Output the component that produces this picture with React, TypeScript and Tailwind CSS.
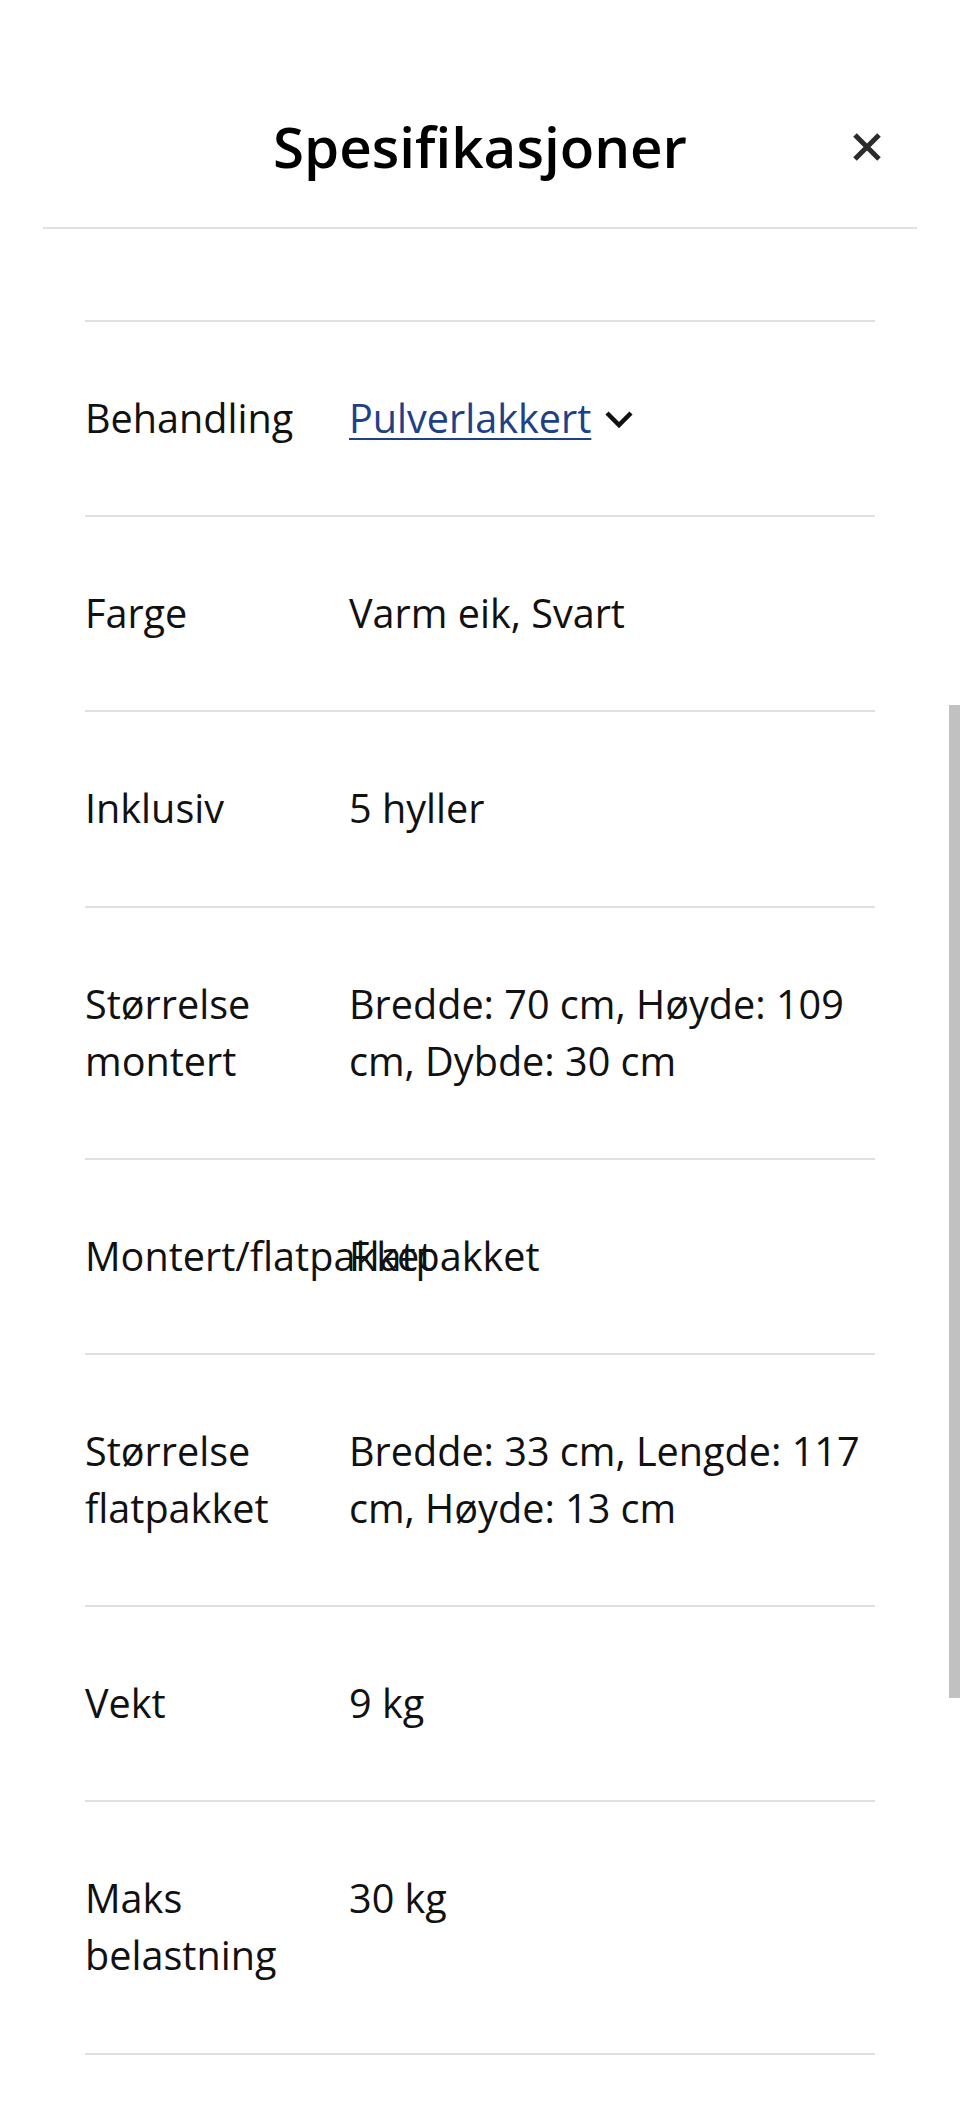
const specs: { label: string; value: string; link?: boolean }[] = [
  { label: 'Behandling', value: 'Pulverlakkert', link: true },
  { label: 'Farge', value: 'Varm eik, Svart' },
  { label: 'Inklusiv', value: '5 hyller' },
  { label: 'Størrelse montert', value: 'Bredde: 70 cm, Høyde: 109 cm, Dybde: 30 cm' },
  { label: 'Montert/flatpakket', value: 'Flatpakket' },
  { label: 'Størrelse flatpakket', value: 'Bredde: 33 cm, Lengde: 117 cm, Høyde: 13 cm' },
  { label: 'Vekt', value: '9 kg' },
  { label: 'Maks belastning', value: '30 kg' },
]

function CloseIcon() {
  return (
    <svg width="32" height="32" viewBox="0 0 32 32" fill="none">
      <path d="M4 4 L28 28 M28 4 L4 28" stroke="#2b2b2b" strokeWidth="5" />
    </svg>
  )
}

function Chevron() {
  return (
    <svg width="32" height="20" viewBox="0 0 32 20" fill="none">
      <path d="M4 4 L16 16 L28 4" stroke="#111" strokeWidth="4.5" strokeLinejoin="miter" />
    </svg>
  )
}

export default function App() {
  return (
    <div className="relative min-h-[2127px] w-full bg-white font-['Open_Sans',sans-serif] text-[#111]">
      <header className="px-[43px]">
        <div className="grid grid-cols-[1fr_auto_1fr] items-center border-b-2 border-[#e0e0e0] pt-[111px] pb-[44px]">
          <div />
          <h1 className="text-[56.5px] leading-[72px] font-semibold text-black">Spesifikasjoner</h1>
          <button className="justify-self-end mr-[34px] flex items-center justify-center">
            <CloseIcon />
          </button>
        </div>
      </header>

      <div className="mx-[85px]">
        <div className="h-[91px]" />
        <div className="border-t-2 border-[#e0e0e0]">
          {specs.map((s) => (
            <div
              key={s.label}
              className="grid grid-cols-[264px_1fr] border-b-2 border-[#e0e0e0] py-[68.1px] text-[39.6px] leading-[57px]"
            >
              <div>{s.label}</div>
              <div>
                {s.link ? (
                  <span className="inline-flex items-center gap-[12px]">
                    <a className="text-[#203f88] underline decoration-2 underline-offset-[5px]">{s.value}</a>
                    <Chevron />
                  </span>
                ) : (
                  s.value
                )}
              </div>
            </div>
          ))}
        </div>
      </div>

      <div className="absolute right-0 top-[705px] h-[993px] w-[11px] bg-[#c1c1c1]" />
    </div>
  )
}
